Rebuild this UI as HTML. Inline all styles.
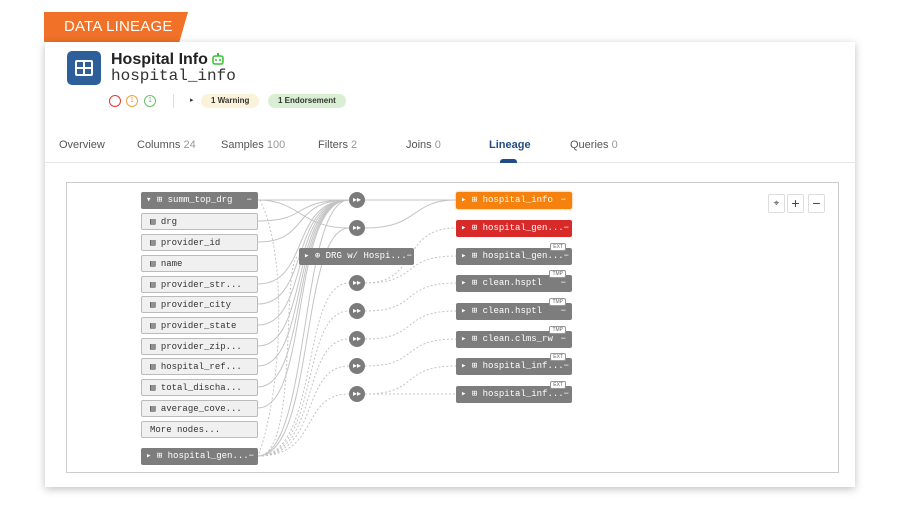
<!DOCTYPE html>
<html><head><meta charset="utf-8"><style>
*{box-sizing:border-box;margin:0;padding:0}
body{width:900px;height:510px;background:#fff;font-family:"Liberation Sans",sans-serif;position:relative;overflow:hidden}
.banner{position:absolute;left:44px;top:12px;width:144px;height:30px;background:#f07127;clip-path:polygon(0 0,100% 0,94% 100%,0 100%);color:#fff;font-size:15px;line-height:30px;padding-left:20px;letter-spacing:.2px}
.card{position:absolute;left:45px;top:42px;width:810px;height:445px;background:#fff;box-shadow:0 2px 8px rgba(0,0,0,.25)}
.logo{position:absolute;left:67px;top:51px;width:34px;height:34px;background:#2d5f9a;border-radius:5px}
.title{position:absolute;left:111px;top:51px;font-size:16px;font-weight:bold;color:#222}
.sub{position:absolute;left:111px;top:67px;font-family:"Liberation Mono",monospace;font-size:16px;color:#333}
.circ{position:absolute;top:95px;width:12px;height:12px;border-radius:50%;border:1.5px solid;font-size:7px;text-align:center;line-height:9px}
.pill{position:absolute;top:94px;height:14px;border-radius:7px;font-size:8px;font-weight:bold;line-height:14px;padding:0 10px;color:#333}
.tabs{position:absolute;left:45px;top:139px;width:810px;height:24px;border-bottom:1px solid #e5e5e5;font-size:11px;color:#555}
.tabs span{position:absolute;top:0}
.tabs b{font-weight:normal;color:#999}
.canvas{position:absolute;left:66px;top:182px;width:773px;height:291px;border:1px solid #ccc}
.n{position:absolute;height:17px;border-radius:2px;font-family:"Liberation Mono",monospace;font-size:9px;line-height:17px;white-space:nowrap}
.g{background:#7d7d7d;color:#fff}
.w{background:#f0f0f0;border:1px solid #bbb;color:#333;padding-left:8px}
.b{position:absolute;width:16px;height:16px;border-radius:50%;background:#7b7b7b;color:#fff;font-size:8px;text-align:center;line-height:16px}
.tag{position:absolute;top:-5px;right:6px;background:#fff;border:1px solid #999;color:#666;font-size:5px;line-height:6px;padding:0 2px;border-radius:2px;font-family:"Liberation Sans",sans-serif}
.ctl{position:absolute;top:194px;width:17px;height:19px;border:1px solid #ddd;border-radius:2px;background:#fff;text-align:center;font-size:14px;line-height:17px;color:#444}
</style></head><body>
<div class="banner">DATA LINEAGE</div>
<div class="card"></div>
<div class="logo"><svg width="34" height="34"><rect x="8" y="9" width="18" height="16" rx="2" fill="#fff"/><rect x="10" y="11" width="6" height="5" fill="#2d5f9a"/><rect x="18" y="11" width="6" height="5" fill="#2d5f9a"/><rect x="10" y="18" width="6" height="5" fill="#2d5f9a"/><rect x="18" y="18" width="6" height="5" fill="#2d5f9a"/></svg></div>
<div class="title">Hospital Info <svg width="12" height="12" style="vertical-align:-1px"><rect x="1" y="3" width="10" height="8" rx="2" fill="none" stroke="#2ec52e" stroke-width="1.5"/><rect x="5" y="0" width="2" height="3" fill="#2ec52e"/><circle cx="4" cy="7" r="1" fill="#2ec52e"/><circle cx="8" cy="7" r="1" fill="#2ec52e"/></svg></div>
<div class="sub">hospital_info</div>
<div class="circ" style="left:109px;border-color:#e0393b"></div>
<div class="circ" style="left:126px;border-color:#eea23b;color:#eea23b">1</div>
<div class="circ" style="left:144px;border-color:#6cbf6c;color:#6cbf6c">1</div>
<div style="position:absolute;left:173px;top:94px;width:1px;height:14px;background:#ddd"></div>
<div style="position:absolute;left:190px;top:96px;font-size:7px;color:#333">▸</div>
<div class="pill" style="left:201px;background:#fbf3d9">1 Warning</div>
<div class="pill" style="left:268px;background:#d9efd4">1 Endorsement</div>
<div class="tabs">
<span style="left:14px">Overview</span>
<span style="left:92px">Columns <b>24</b></span>
<span style="left:176px">Samples <b>100</b></span>
<span style="left:273px">Filters <b>2</b></span>
<span style="left:361px">Joins <b>0</b></span>
<span style="left:444px;color:#234c84;font-weight:bold">Lineage</span>
<span style="left:525px">Queries <b>0</b></span>
<div style="position:absolute;left:455px;top:20px;width:17px;height:4px;background:#234c84;border-radius:3px 3px 0 0"></div>
</div>
<div class="canvas"></div>
<svg style="position:absolute;left:0;top:0" width="900" height="510" fill="none" stroke="#c4c4c4" stroke-width="1">
<g>
<path d="M258 200 L349 200"/>
<path d="M258 200 C300 200,300 228,349 228"/>
<path d="M258 221 C310 221,290 200,349 200"/>
<path d="M258 242 C310 242,290 200,349 200"/>
<path d="M258 284 C310 284,290 200,349 200"/>
<path d="M258 304 C310 304,290 200,349 200"/>
<path d="M258 325 C310 325,290 200,349 200"/>
<path d="M258 346 C310 346,290 200,349 200"/>
<path d="M258 366 C310 366,290 200,349 200"/>
<path d="M258 387 C310 387,290 200,349 200"/>
<path d="M258 408 C310 408,290 200,349 200"/>
<path d="M258 456 C310 456,300 200,349 200"/>
<path d="M258 456 C315 456,300 228,349 228"/>
<path d="M365 200 L456 200"/>
<path d="M365 228 C420 228,410 200,456 200"/>
</g>
<g stroke-dasharray="2 2">
<path d="M258 456 C300 456,280 256,299 256"/>
<path d="M258 456 C320 456,300 283,349 283"/>
<path d="M258 456 C320 456,300 311,349 311"/>
<path d="M258 456 C320 456,300 339,349 339"/>
<path d="M258 456 C320 456,300 366,349 366"/>
<path d="M258 456 C320 456,300 394,349 394"/>
<path d="M260 200 C290 260,280 400,258 456"/>
<path d="M365 283 C420 283,400 228,456 228"/>
<path d="M365 283 C420 283,400 256,456 256"/>
<path d="M365 311 C420 311,400 283,456 283"/>
<path d="M365 339 C420 339,400 311,456 311"/>
<path d="M365 366 C420 366,400 339,456 339"/>
<path d="M365 394 C420 394,400 366,456 366"/>
<path d="M365 394 L456 394"/>
</g>
</svg>
<div class="n g" style="left:141px;top:192px;width:117px;padding-left:5px">▾ ⊞ summ_top_drg<span style="position:absolute;right:6px">−</span></div>
<div class="n w" style="left:141px;top:213px;width:117px">▤ drg</div>
<div class="n w" style="left:141px;top:234px;width:117px">▤ provider_id</div>
<div class="n w" style="left:141px;top:255px;width:117px">▤ name</div>
<div class="n w" style="left:141px;top:276px;width:117px">▤ provider_str...</div>
<div class="n w" style="left:141px;top:296px;width:117px">▤ provider_city</div>
<div class="n w" style="left:141px;top:317px;width:117px">▤ provider_state</div>
<div class="n w" style="left:141px;top:338px;width:117px">▤ provider_zip...</div>
<div class="n w" style="left:141px;top:358px;width:117px">▤ hospital_ref...</div>
<div class="n w" style="left:141px;top:379px;width:117px">▤ total_discha...</div>
<div class="n w" style="left:141px;top:400px;width:117px">▤ average_cove...</div>
<div class="n w" style="left:141px;top:421px;width:117px">More nodes...</div>
<div class="n g" style="left:141px;top:448px;width:117px;padding-left:5px">▸ ⊞ hospital_gen...−</div>
<div class="n g" style="left:299px;top:248px;width:115px;padding-left:5px">▸ ⊕ DRG w/ Hospi...−</div>
<div class="b" style="left:349px;top:192px">▸▸</div>
<div class="b" style="left:349px;top:220px">▸▸</div>
<div class="b" style="left:349px;top:275px">▸▸</div>
<div class="b" style="left:349px;top:303px">▸▸</div>
<div class="b" style="left:349px;top:331px">▸▸</div>
<div class="b" style="left:349px;top:358px">▸▸</div>
<div class="b" style="left:349px;top:386px">▸▸</div>
<div class="n g" style="left:456px;top:192px;width:116px;padding-left:5px;background:#f5820f;box-shadow:0 0 2px #f5a050">▸ ⊞ hospital_info<span style="position:absolute;right:6px">−</span></div>
<div class="n g" style="left:456px;top:220px;width:116px;padding-left:5px;background:#d92a2a">▸ ⊞ hospital_gen...−</div>
<div class="n g" style="left:456px;top:248px;width:116px;padding-left:5px">▸ ⊞ hospital_gen...−<span class="tag">EXT</span></div>
<div class="n g" style="left:456px;top:275px;width:116px;padding-left:5px">▸ ⊞ clean.hsptl<span style="position:absolute;right:6px">−</span><span class="tag">TMP</span></div>
<div class="n g" style="left:456px;top:303px;width:116px;padding-left:5px">▸ ⊞ clean.hsptl<span style="position:absolute;right:6px">−</span><span class="tag">TMP</span></div>
<div class="n g" style="left:456px;top:331px;width:116px;padding-left:5px">▸ ⊞ clean.clms_rw<span style="position:absolute;right:6px">−</span><span class="tag">TMP</span></div>
<div class="n g" style="left:456px;top:358px;width:116px;padding-left:5px">▸ ⊞ hospital_inf...−<span class="tag">EXT</span></div>
<div class="n g" style="left:456px;top:386px;width:116px;padding-left:5px">▸ ⊞ hospital_inf...−<span class="tag">EXT</span></div>
<div class="ctl" style="left:768px;font-size:10px">⌖</div>
<div class="ctl" style="left:787px">+</div>
<div class="ctl" style="left:808px">−</div>
</body></html>
